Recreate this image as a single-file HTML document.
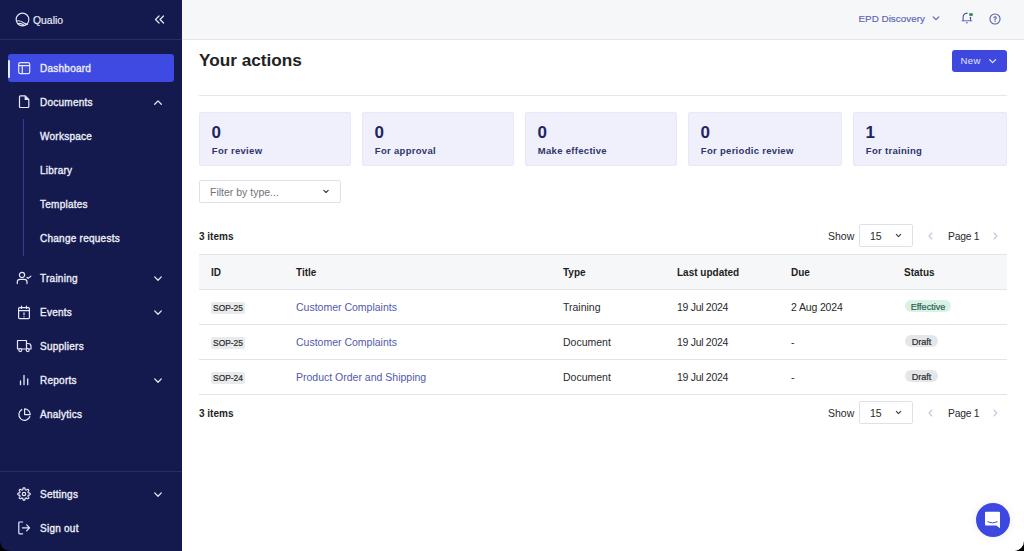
<!DOCTYPE html>
<html><head><meta charset="utf-8">
<style>
*{box-sizing:border-box;margin:0;padding:0}
html,body{width:1024px;height:551px;overflow:hidden;background:#fff;font-family:"Liberation Sans",sans-serif}
.a{position:absolute;white-space:nowrap}
#side{position:absolute;left:0;top:0;width:182px;height:551px;background:#151a4e}
.nav{position:absolute;left:40px;font-size:10px;letter-spacing:0.25px;line-height:14px;color:#eceef8;-webkit-text-stroke:0.35px #eceef8}
.ic{position:absolute}
#top{position:absolute;left:182px;top:0;width:842px;height:40px;background:#f6f7f9;border-bottom:1px solid #e3e4e9}
.card{position:absolute;top:112px;height:54px;background:#eff0fc;border:1px solid #e7e9f7;border-radius:2px}
.num{position:absolute;left:11.6px;top:10.3px;font-size:17px;font-weight:700;color:#1f2466;line-height:20px}
.lab{position:absolute;left:11.8px;top:32.2px;font-size:9.5px;font-weight:700;letter-spacing:0.3px;color:#30356a;line-height:12px}
.hdr{font-size:10px;font-weight:700;color:#1e1e1e;line-height:12px}
.cell{font-size:10.5px;color:#2a2a2a;line-height:12px}
.link{font-size:10.5px;color:#5259ab;line-height:12px}
.hl{position:absolute;left:199px;width:808px;height:1px;background:#e3e4e8}
.sop{position:absolute;left:211px;width:34px;height:12px;background:#e9eaec;border-radius:2px;font-size:8.4px;line-height:12.8px;text-align:center;color:#2a2a2a;-webkit-text-stroke:0.2px #2a2a2a}
.badge{position:absolute;left:904px;height:12px;border-radius:6px;font-size:9.1px;line-height:13px;text-align:center;-webkit-text-stroke:0.2px currentColor}
</style></head><body>

<div id="side">
  <!-- logo -->
  <svg class="ic" style="left:15.4px;top:11.8px" width="16" height="16" viewBox="0 0 16 16" fill="none" stroke="#e2e4f4" stroke-width="1.15">
    <circle cx="7.5" cy="7.5" r="6.35"/>
    <path d="M1.2 9.2 C4 7.8 7 9.5 9.5 11.2 C11 12.2 12.3 12.5 13 12.3"/>
    <path d="M2.5 11.8 C5 10.5 7.5 12 9.5 13.5"/>
  </svg>
  <div class="a" style="left:33px;top:13.5px;font-size:10.4px;line-height:13px;color:#e6e7f3;-webkit-text-stroke:0.2px #e6e7f3">Qualio</div>
  <svg class="ic" style="left:154px;top:15px" width="11" height="9" viewBox="0 0 11 9" fill="none" stroke="#e6e7f3" stroke-width="1.3" stroke-linecap="round" stroke-linejoin="round">
    <path d="M5 1 L1.5 4.5 L5 8"/><path d="M9.5 1 L6 4.5 L9.5 8"/>
  </svg>
  <div class="a" style="left:0;top:39px;width:182px;height:1px;background:#282d62"></div>

  <!-- active -->
  <div class="a" style="left:8px;top:54px;width:165.5px;height:28px;background:#3f4ae2;border-radius:3px"></div>
  <div class="a" style="left:8.3px;top:60px;width:1.6px;height:18px;background:#e8eaff;border-radius:1px"></div>
  <svg class="ic" style="left:17px;top:61px" width="14" height="14" viewBox="0 0 14 14" fill="none" stroke="#e6e8fb" stroke-width="1.2"><rect x="1.7" y="1.6" width="11" height="11" rx="1.7"/><path d="M1.7 4.6 H12.7 M5.3 4.6 V12.6"/></svg>
  <div class="a nav" style="top:62px">Dashboard</div>

  <!-- documents -->
  <svg class="ic" style="left:17px;top:94px" width="14" height="15" viewBox="0 0 14 15" fill="none" stroke="#e6e8fb" stroke-width="1.2" stroke-linejoin="round"><path d="M3.4 1.9 H8.2 L11.8 5.5 V12.6 Q11.8 13.5 10.9 13.5 H3.4 Q2.5 13.5 2.5 12.6 V2.8 Q2.5 1.9 3.4 1.9 Z"/><path d="M8.2 2 V5.5 H11.7" fill="#e6e8fb"/></svg>
  <div class="a nav" style="top:96px">Documents</div>
  <svg class="ic" style="left:153px;top:99px" width="10" height="7" viewBox="0 0 10 7" fill="none" stroke="#e6e8fb" stroke-width="1.3" stroke-linecap="round" stroke-linejoin="round"><path d="M1.7 5.2 L5 1.9 L8.3 5.2"/></svg>

  <div class="a" style="left:23px;top:119px;width:1.2px;height:137px;background:#333a98"></div>
  <div class="a nav" style="top:130px">Workspace</div>
  <div class="a nav" style="top:164px">Library</div>
  <div class="a nav" style="top:198px">Templates</div>
  <div class="a nav" style="top:232px">Change requests</div>

  <!-- training -->
  <svg class="ic" style="left:16px;top:271px" width="16" height="14" viewBox="0 0 16 14" fill="none" stroke="#e6e8fb" stroke-width="1.2" stroke-linecap="round" stroke-linejoin="round"><circle cx="6" cy="3.9" r="2.6"/><path d="M1.3 12.6 V11 Q1.3 8.3 4 8.3 H8.3 Q11 8.3 11 11 V12.6"/><path d="M11 6.4 L12.3 7.4 L14.9 5.1"/></svg>
  <div class="a nav" style="top:272px">Training</div>
  <svg class="ic" style="left:153px;top:275px" width="10" height="7" viewBox="0 0 10 7" fill="none" stroke="#e6e8fb" stroke-width="1.3" stroke-linecap="round" stroke-linejoin="round"><path d="M1.7 1.9 L5 5.2 L8.3 1.9"/></svg>

  <!-- events -->
  <svg class="ic" style="left:17px;top:305px" width="14" height="15" viewBox="0 0 14 15" fill="none" stroke="#e6e8fb" stroke-width="1.2" stroke-linecap="round">
    <rect x="1.6" y="2.6" width="10.8" height="11" rx="1"/><path d="M1.6 5.6 H12.4 M4.5 1 V3.5 M9.5 1 V3.5 M7 7.8 V9.8 M7 11.6 V11.8"/>
  </svg>
  <div class="a nav" style="top:306px">Events</div>
  <svg class="ic" style="left:153px;top:309px" width="10" height="7" viewBox="0 0 10 7" fill="none" stroke="#e6e8fb" stroke-width="1.3" stroke-linecap="round" stroke-linejoin="round"><path d="M1.7 1.9 L5 5.2 L8.3 1.9"/></svg>

  <!-- suppliers -->
  <svg class="ic" style="left:16px;top:339px" width="16" height="14" viewBox="0 0 16 14" fill="none" stroke="#e6e8fb" stroke-width="1.2" stroke-linejoin="round"><path d="M1.5 1.5 H10.5 V10 H1.5 Z"/><path d="M10.5 4.5 H12 Q15 4.5 15 7.3 V10 H10.5"/><circle cx="4.3" cy="11.1" r="1.5" fill="#151a4e"/><circle cx="11.7" cy="11.1" r="1.5" fill="#151a4e"/></svg>
  <div class="a nav" style="top:340px">Suppliers</div>

  <!-- reports -->
  <svg class="ic" style="left:18px;top:373px" width="12" height="14" viewBox="0 0 12 14" fill="none" stroke="#e6e8fb" stroke-width="1.3" stroke-linecap="round">
    <path d="M2.5 8 V11.7 M6 2.4 V11.7 M9.7 5.8 V11.7"/>
  </svg>
  <div class="a nav" style="top:374px">Reports</div>
  <svg class="ic" style="left:153px;top:377px" width="10" height="7" viewBox="0 0 10 7" fill="none" stroke="#e6e8fb" stroke-width="1.3" stroke-linecap="round" stroke-linejoin="round"><path d="M1.7 1.9 L5 5.2 L8.3 1.9"/></svg>

  <!-- analytics -->
  <svg class="ic" style="left:17px;top:407px" width="15" height="15" viewBox="0 0 15 15" fill="none" stroke="#e6e8fb" stroke-width="1.2" stroke-linejoin="round"><path d="M5.2 2.4 A5.7 5.7 0 1 0 13 9.3"/><path d="M7.6 1.9 V7.6 H13.2 A5.6 5.6 0 0 0 7.6 1.9 Z"/></svg>
  <div class="a nav" style="top:408px">Analytics</div>

  <div class="a" style="left:0;top:471px;width:182px;height:1px;background:#282d62"></div>

  <!-- settings -->
  <svg class="ic" style="left:16px;top:485.7px" width="16" height="16" viewBox="0 0 16 16" fill="none" stroke="#e6e8fb" stroke-width="1.2" stroke-linejoin="round"><path d="M14.20 8.00 L14.18 8.32 L14.10 8.64 L13.77 8.91 L12.98 9.06 L12.41 9.18 L12.21 9.37 L12.11 9.58 L12.02 9.79 L11.95 10.01 L11.95 10.28 L12.27 10.77 L12.73 11.44 L12.76 11.86 L12.60 12.14 L12.38 12.38 L12.14 12.60 L11.86 12.76 L11.44 12.73 L10.77 12.27 L10.28 11.95 L10.01 11.95 L9.79 12.02 L9.58 12.11 L9.37 12.21 L9.18 12.41 L9.06 12.98 L8.91 13.77 L8.64 14.10 L8.32 14.18 L8.00 14.20 L7.68 14.18 L7.36 14.10 L7.09 13.77 L6.94 12.98 L6.82 12.41 L6.63 12.21 L6.42 12.11 L6.21 12.02 L5.99 11.95 L5.72 11.95 L5.23 12.27 L4.56 12.73 L4.14 12.76 L3.86 12.60 L3.62 12.38 L3.40 12.14 L3.24 11.86 L3.27 11.44 L3.73 10.77 L4.05 10.28 L4.05 10.01 L3.98 9.79 L3.89 9.58 L3.79 9.37 L3.59 9.18 L3.02 9.06 L2.23 8.91 L1.90 8.64 L1.82 8.32 L1.80 8.00 L1.82 7.68 L1.90 7.36 L2.23 7.09 L3.02 6.94 L3.59 6.82 L3.79 6.63 L3.89 6.42 L3.98 6.21 L4.05 5.99 L4.05 5.72 L3.73 5.23 L3.27 4.56 L3.24 4.14 L3.40 3.86 L3.62 3.62 L3.86 3.40 L4.14 3.24 L4.56 3.27 L5.23 3.73 L5.72 4.05 L5.99 4.05 L6.21 3.98 L6.42 3.89 L6.63 3.79 L6.82 3.59 L6.94 3.02 L7.09 2.23 L7.36 1.90 L7.68 1.82 L8.00 1.80 L8.32 1.82 L8.64 1.90 L8.91 2.23 L9.06 3.02 L9.18 3.59 L9.37 3.79 L9.58 3.89 L9.79 3.98 L10.01 4.05 L10.28 4.05 L10.77 3.73 L11.44 3.27 L11.86 3.24 L12.14 3.40 L12.38 3.62 L12.60 3.86 L12.76 4.14 L12.73 4.56 L12.27 5.23 L11.95 5.72 L11.95 5.99 L12.02 6.21 L12.11 6.42 L12.21 6.63 L12.41 6.82 L12.98 6.94 L13.77 7.09 L14.10 7.36 L14.18 7.68 Z"/><circle cx="8" cy="8" r="1.7"/></svg>
  <div class="a nav" style="top:488px">Settings</div>
  <svg class="ic" style="left:153px;top:491px" width="10" height="7" viewBox="0 0 10 7" fill="none" stroke="#e6e8fb" stroke-width="1.3" stroke-linecap="round" stroke-linejoin="round"><path d="M1.7 1.9 L5 5.2 L8.3 1.9"/></svg>

  <!-- sign out -->
  <svg class="ic" style="left:17px;top:521px" width="14" height="14" viewBox="0 0 14 14" fill="none" stroke="#e6e8fb" stroke-width="1.2" stroke-linecap="round" stroke-linejoin="round"><path d="M5.6 1 H2.6 Q1.8 1 1.8 1.8 V12 Q1.8 12.8 2.6 12.8 H5.6"/><path d="M5.4 6.8 H12.6 M9.6 3.8 L12.6 6.8 L9.6 9.8"/></svg>
  <div class="a nav" style="top:522px">Sign out</div>
</div>

<div id="top"></div>
<div class="a" style="left:858.5px;top:13.2px;font-size:9.9px;line-height:12px;color:#5c63b4;-webkit-text-stroke:0.15px #5c63b4">EPD Discovery</div>
<svg class="ic" style="left:931px;top:15.3px" width="10" height="7" viewBox="0 0 10 7" fill="none" stroke="#5c63b4" stroke-width="1.15" stroke-linecap="round" stroke-linejoin="round"><path d="M2.2 1.8 L5 4.6 L7.8 1.8"/></svg>
<svg class="ic" style="left:960px;top:11px" width="14" height="14" viewBox="0 0 14 14" fill="none" stroke="#4d529e" stroke-width="1.1" stroke-linecap="round" stroke-linejoin="round"><path d="M3.1 9.7 V6.6 Q3.1 2.4 7.2 2.1"/><path d="M10.5 6.3 V9.7"/><path d="M2.1 9.7 H11.8" stroke="#6a70c0"/><path d="M6.4 11.8 H7.3"/></svg>
<div class="a" style="left:969.1px;top:12.5px;width:3.8px;height:3.8px;border-radius:50%;background:#3e8a5c"></div>
<svg class="ic" style="left:988.3px;top:11.6px" width="14" height="14" viewBox="0 0 14 14" fill="none" stroke="#565ca8" stroke-width="1.05" stroke-linecap="round"><circle cx="7" cy="7" r="5.05"/><path d="M6 5.9 A1.1 1.1 0 1 1 7.4 6.9 Q7 7.15 7 7.8"/><circle cx="7" cy="9.2" r="0.25" fill="#565ca8"/></svg>

<!-- title -->
<div class="a" style="left:199px;top:50px;font-size:17.2px;line-height:20px;font-weight:700;color:#222">Your actions</div>
<div class="a" style="left:952px;top:50px;width:55px;height:22px;background:#3e48df;border-radius:3px"></div>
<div class="a" style="left:960.5px;top:55.4px;font-size:9.6px;letter-spacing:0.35px;line-height:12px;color:#e3e6ff">New</div>
<svg class="ic" style="left:988px;top:58px" width="10" height="7" viewBox="0 0 10 7" fill="none" stroke="#e3e6ff" stroke-width="1.3" stroke-linecap="round" stroke-linejoin="round"><path d="M1.6 1.6 L4.6 4.6 L7.6 1.6"/></svg>
<div class="hl" style="top:95px;background:#e6e7ea"></div>

<!-- cards -->
<div class="card" style="left:199px;width:152px"><div class="num">0</div><div class="a lab">For review</div></div>
<div class="card" style="left:362px;width:152px"><div class="num">0</div><div class="a lab">For approval</div></div>
<div class="card" style="left:525px;width:152px"><div class="num">0</div><div class="a lab">Make effective</div></div>
<div class="card" style="left:688px;width:154px"><div class="num">0</div><div class="a lab">For periodic review</div></div>
<div class="card" style="left:853px;width:154px"><div class="num">1</div><div class="a lab">For training</div></div>

<!-- filter -->
<div class="a" style="left:199px;top:180px;width:142px;height:23px;border:1px solid #dfe0ea;border-radius:2px;background:#fff"></div>
<div class="a" style="left:210px;top:186px;font-size:10.5px;line-height:12px;color:#70727a">Filter by type...</div>
<svg class="ic" style="left:322px;top:188px" width="8" height="7" viewBox="0 0 8 7" fill="none" stroke="#3a3a3a" stroke-width="1.1" stroke-linecap="round" stroke-linejoin="round"><path d="M1.8 2.3 L4 4.5 L6.2 2.3"/></svg>

<!-- top pager -->
<div class="a hdr" style="left:199px;top:231px">3 items</div>
<div class="a cell" style="left:828px;top:230px">Show</div>
<div class="a" style="left:859px;top:224px;width:54px;height:23px;border:1px solid #dfe0ea;border-radius:2px"></div>
<div class="a cell" style="left:870px;top:230px">15</div>
<svg class="ic" style="left:894px;top:232px" width="9" height="7" viewBox="0 0 9 7" fill="none" stroke="#3a3a3a" stroke-width="1.1" stroke-linecap="round" stroke-linejoin="round"><path d="M2.3 2.4 L4.5 4.6 L6.7 2.4"/></svg>
<svg class="ic" style="left:927px;top:232px" width="7" height="9" viewBox="0 0 7 9" fill="none" stroke="#c3c6de" stroke-width="1.1" stroke-linecap="round" stroke-linejoin="round"><path d="M4.8 1 L2 4 L4.8 7"/></svg>
<div class="a cell" style="left:948px;top:230.6px;font-size:10.3px;letter-spacing:-0.2px;word-spacing:-0.2px">Page 1</div>
<svg class="ic" style="left:992px;top:232px" width="7" height="9" viewBox="0 0 7 9" fill="none" stroke="#c3c6de" stroke-width="1.1" stroke-linecap="round" stroke-linejoin="round"><path d="M2 1 L4.8 4 L2 7"/></svg>

<!-- table -->
<div class="a" style="left:199px;top:254px;width:808px;height:35px;background:#f6f7f9"></div>
<div class="hl" style="top:254px"></div>
<div class="hl" style="top:289px"></div>
<div class="hl" style="top:324px"></div>
<div class="hl" style="top:359px"></div>
<div class="hl" style="top:394px"></div>

<div class="a hdr" style="left:211px;top:267px">ID</div>
<div class="a hdr" style="left:296px;top:267px">Title</div>
<div class="a hdr" style="left:563px;top:267px">Type</div>
<div class="a hdr" style="left:677px;top:267px">Last updated</div>
<div class="a hdr" style="left:791px;top:267px">Due</div>
<div class="a hdr" style="left:904px;top:267px">Status</div>

<div class="sop" style="top:302px">SOP-25</div>
<div class="a link" style="left:296px;top:301px">Customer Complaints</div>
<div class="a cell" style="left:563px;top:301px">Training</div>
<div class="a cell" style="left:677px;top:301px;letter-spacing:-0.3px">19 Jul 2024</div>
<div class="a cell" style="left:791px;top:301px;letter-spacing:-0.15px">2 Aug 2024</div>
<div class="badge" style="top:300px;left:905px;width:46px;background:#d9f2e8;color:#2b5e49;line-height:14px">Effective</div>

<div class="sop" style="top:337px">SOP-25</div>
<div class="a link" style="left:296px;top:336px">Customer Complaints</div>
<div class="a cell" style="left:563px;top:336px">Document</div>
<div class="a cell" style="left:677px;top:336px;letter-spacing:-0.3px">19 Jul 2024</div>
<div class="a cell" style="left:791px;top:336px">-</div>
<div class="badge" style="top:335px;left:905px;width:33px;background:#e5e6ea;color:#2a2a2a;line-height:14px">Draft</div>

<div class="sop" style="top:372px">SOP-24</div>
<div class="a link" style="left:296px;top:371px">Product Order and Shipping</div>
<div class="a cell" style="left:563px;top:371px">Document</div>
<div class="a cell" style="left:677px;top:371px;letter-spacing:-0.3px">19 Jul 2024</div>
<div class="a cell" style="left:791px;top:371px">-</div>
<div class="badge" style="top:370px;left:905px;width:33px;background:#e5e6ea;color:#2a2a2a;line-height:14px">Draft</div>

<!-- bottom pager -->
<div class="a hdr" style="left:199px;top:408px">3 items</div>
<div class="a cell" style="left:828px;top:407px">Show</div>
<div class="a" style="left:859px;top:401px;width:54px;height:23px;border:1px solid #dfe0ea;border-radius:2px"></div>
<div class="a cell" style="left:870px;top:407px">15</div>
<svg class="ic" style="left:894px;top:409px" width="9" height="7" viewBox="0 0 9 7" fill="none" stroke="#3a3a3a" stroke-width="1.1" stroke-linecap="round" stroke-linejoin="round"><path d="M2.3 2.4 L4.5 4.6 L6.7 2.4"/></svg>
<svg class="ic" style="left:927px;top:409px" width="7" height="9" viewBox="0 0 7 9" fill="none" stroke="#c3c6de" stroke-width="1.1" stroke-linecap="round" stroke-linejoin="round"><path d="M4.8 1 L2 4 L4.8 7"/></svg>
<div class="a cell" style="left:948px;top:407.6px;font-size:10.3px;letter-spacing:-0.2px;word-spacing:-0.2px">Page 1</div>
<svg class="ic" style="left:992px;top:409px" width="7" height="9" viewBox="0 0 7 9" fill="none" stroke="#c3c6de" stroke-width="1.1" stroke-linecap="round" stroke-linejoin="round"><path d="M2 1 L4.8 4 L2 7"/></svg>

<!-- chat -->
<div class="a" style="left:976px;top:503px;width:34px;height:34px;border-radius:50%;background:#3c48e0;box-shadow:0 0 10px rgba(0,0,0,0.08)"></div>
<svg class="ic" style="left:984px;top:511px" width="18" height="18" viewBox="0 0 18 18"><path d="M2 0.8 H15 Q16 0.8 16 1.8 V17.3 L12.3 14.4 H2 Q1 14.4 1 13.4 V1.8 Q1 0.8 2 0.8 Z" fill="#fff"/><path d="M3.8 10.9 A11 11 0 0 0 13.2 10.9" fill="none" stroke="#3c48e0" stroke-width="1" stroke-linecap="round"/></svg>
<div style="position:absolute;left:0;top:-20px;width:1024px;height:571px;border-radius:0 0 10px 10px;box-shadow:0 0 0 30px #000;pointer-events:none"></div>
</body></html>
